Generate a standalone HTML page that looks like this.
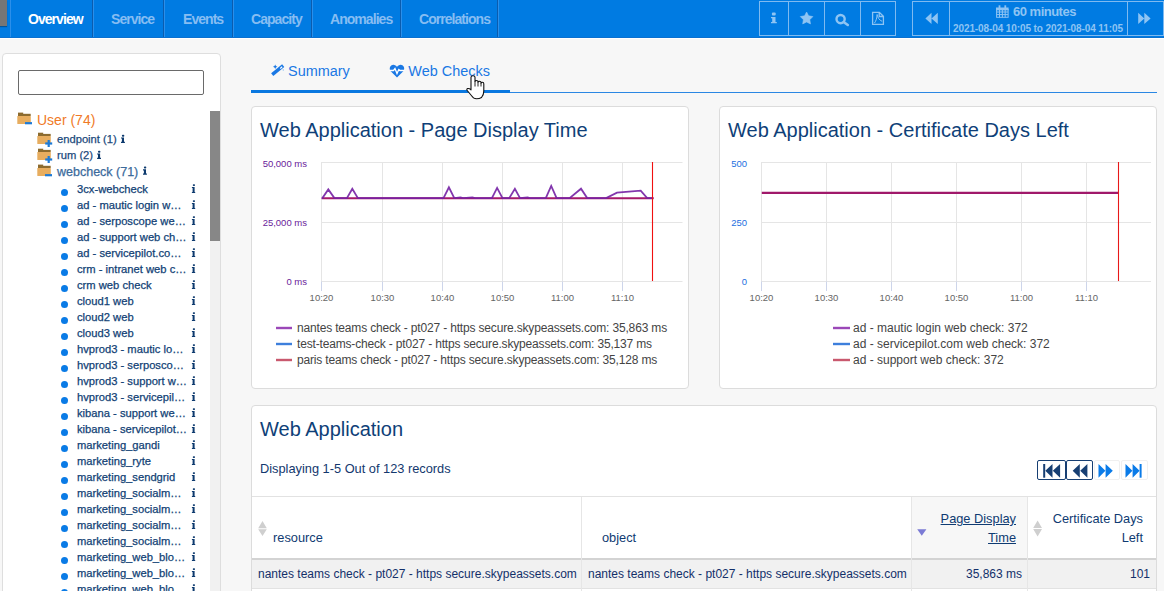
<!DOCTYPE html>
<html><head><meta charset="utf-8">
<style>
*{box-sizing:border-box;margin:0;padding:0}
html,body{width:1164px;height:591px;overflow:hidden;background:#f7f7f7;font-family:"Liberation Sans",sans-serif;position:relative}
.a{position:absolute;white-space:nowrap}
#nav{position:absolute;left:0;top:0;width:1164px;height:38px;background:#007be2;border-bottom:1px solid #0a70d0}
#navline{position:absolute;left:0;top:38px;width:1164px;height:1px;background:#fff}
.sepd{position:absolute;top:0;width:1px;height:37px;background:#0b5cae}
.sepl{position:absolute;top:0;width:1px;height:37px;background:#2b8fea}
.nv{position:absolute;top:11px;font-size:14px;font-weight:bold;letter-spacing:-0.95px;color:#86bdf2}
.ib{position:absolute;top:1px;height:35px;border:1px solid #7fbaf0}
.panel{position:absolute;background:#fff;border:1px solid #dcdcdc;border-radius:4px}
.ttl{position:absolute;font-size:20px;color:#0f3f78;margin-top:1px}
.tree{position:absolute;font-size:11.2px;color:#113f75;-webkit-text-stroke-width:0.25px}
.dot{position:absolute;width:7px;height:7px;border-radius:50%;background:#0a7be6}
.inf{position:absolute;font-family:"Liberation Serif",serif;font-weight:bold;font-size:11px;color:#103a6a}
.leg{font-size:12px;color:#444;letter-spacing:-0.17px}
.th{font-size:12.8px;color:#0f3b72}
.td{font-size:12px;color:#13306a}
</style></head>
<body>
<div id="nav"></div>
<div id="navline"></div>
<div class="a" style="left:0;top:0;width:7px;height:26px;background:#767676;box-shadow:0 1px 1px rgba(0,0,0,0.3)"></div>
<div class="sepl" style="left:10px"></div>
<div class="sepd" style="left:92px"></div><div class="sepl" style="left:93px"></div>
<div class="sepd" style="left:163px"></div><div class="sepl" style="left:164px"></div>
<div class="sepd" style="left:232px"></div><div class="sepl" style="left:233px"></div>
<div class="sepd" style="left:311px"></div><div class="sepl" style="left:312px"></div>
<div class="sepd" style="left:400px"></div><div class="sepl" style="left:401px"></div>
<div class="sepd" style="left:497px"></div><div class="sepl" style="left:498px"></div>
<div class="a nv" style="left:28px;color:#fff">Overview</div>
<div class="a nv" style="left:111px">Service</div>
<div class="a nv" style="left:183px">Events</div>
<div class="a nv" style="left:251px">Capacity</div>
<div class="a nv" style="left:330px">Anomalies</div>
<div class="a nv" style="left:419px">Correlations</div>


<!-- nav right buttons -->
<div class="ib" style="left:759px;width:137px"></div>
<div class="a" style="left:788px;top:1px;width:1px;height:35px;background:#7fbaf0"></div>
<div class="a" style="left:824px;top:1px;width:1px;height:35px;background:#7fbaf0"></div>
<div class="a" style="left:860px;top:1px;width:1px;height:35px;background:#7fbaf0"></div>
<svg class="a" style="left:0;top:0" width="1164" height="38">
 <g fill="#8ec4f3">
  <!-- info -->
  <rect x="771.9" y="12.4" width="3.8" height="3.2" rx="1"/>
  <path d="M771 17h4.5v5h1.3v1.2h-5.8v-1.2h1.2v-3.8h-1.2z"/>
  <!-- star -->
  <path d="M806.6 12.0 L808.6 15.8 L812.9 16.6 L809.8 19.7 L810.5 23.9 L806.6 22.0 L802.7 23.9 L803.4 19.7 L800.3 16.6 L804.6 15.8 Z" stroke="#8ec4f3" stroke-width="0.6" stroke-linejoin="round"/>
 </g>
 <g fill="none" stroke="#8ec4f3">
  <circle cx="840.6" cy="19.1" r="4.1" stroke-width="2.4"/>
  <path d="M843.6 22 L847.8 25" stroke-width="2.6" stroke-linecap="round"/>
  <path d="M872.6 12.3h6.8l4 4v8.1h-10.8z M879.2 12.3v4.2h4.2" stroke-width="1.3"/>
  <path d="M874.5 23c1.5-2 2.5-5 2.6-8.5c0.5 3 2 5.5 5 6.8" stroke-width="1"/>
 </g>
 <g fill="#8ec4f3">
  <!-- rewind -->
  <path d="M925.4 18.4 L931.5 12.7 V24.1 Z M931.5 18.4 L937.8 12.7 V24.1 Z"/>
  <!-- forward -->
  <path d="M1138.2 12.7 L1144.3 18.4 L1138.2 24.1 Z M1144.3 12.7 L1150.6 18.4 L1144.3 24.1 Z"/>
  <!-- calendar -->
  <rect x="996" y="7.5" width="12.6" height="2.8"/>
  <rect x="998.6" y="5.3" width="1.8" height="3"/><rect x="1004.4" y="5.3" width="1.8" height="3"/>
 </g>
 <g fill="none" stroke="#8ec4f3" stroke-width="1">
  <rect x="996.6" y="9.5" width="11.5" height="7.8"/>
  <path d="M999.5 9.5v7.8M1002.4 9.5v7.8M1005.2 9.5v7.8M996.6 12h11.5M996.6 14.6h11.5"/>
 </g>
</svg>
<div class="ib" style="left:912px;width:252px"></div>
<div class="a" style="left:949px;top:1px;width:1px;height:35px;background:#7fbaf0"></div>
<div class="a" style="left:1127px;top:1px;width:1px;height:35px;background:#7fbaf0"></div>
<div class="a" style="left:1013px;top:3.5px;font-size:13px;font-weight:bold;color:#8ec4f3;letter-spacing:-0.5px">60 minutes</div>
<div class="a" style="left:953px;top:23px;font-size:10px;font-weight:bold;letter-spacing:-0.1px;color:#8ec4f3">2021-08-04 10:05 to 2021-08-04 11:05</div>

<!-- sidebar -->
<div class="panel" style="left:2px;top:53px;width:219px;height:560px;border-color:#dedede"></div>
<div class="a" style="left:18px;top:70px;width:186px;height:25px;border:1px solid #6a6a6a;border-radius:2px;background:#fff"></div>
<div class="a" style="left:210px;top:111px;width:10px;height:480px;background:#f1f1f1"></div>
<div class="a" style="left:210px;top:111px;width:10px;height:130px;background:#878787"></div>
<svg class="a" style="left:0;top:100px" width="220" height="90">
 <defs>
  <g id="fold"><rect x="1" y="0.3" width="5.2" height="1.5" fill="#8c6b2f"/><rect x="1" y="1.5" width="12.7" height="2.2" fill="#8c6b2f"/><rect x="0.3" y="3.6" width="13.5" height="8.1" rx="0.6" fill="#e7ad5f"/></g>
  <g id="minus"><rect x="8" y="9.8" width="7" height="2.2" fill="#1d7ad6"/></g>
  <g id="plus"><rect x="8.2" y="10" width="7" height="2.2" fill="#1d7ad6"/><rect x="10.6" y="7.6" width="2.2" height="7" fill="#1d7ad6"/></g>
 </defs>
 <g transform="translate(17,12.3)"><use href="#fold"/><use href="#minus"/></g>
 <g transform="translate(37,32.4)"><use href="#fold"/><use href="#plus"/></g>
 <g transform="translate(37,48.4)"><use href="#fold"/><use href="#plus"/></g>
 <g transform="translate(37,64.3)"><use href="#fold"/><use href="#minus"/></g>
</svg>
<div class="a" style="left:37px;top:112px;font-size:14px;color:#f07a27">User (74)</div>
<div class="a tree" style="left:57px;top:133px;color:#1c4a7c">endpoint (1)</div>
<div class="a tree" style="left:57px;top:149px;color:#1c4a7c">rum (2)</div>
<div class="a tree" style="left:57px;top:164.5px;font-size:12.5px;color:#3b6a9b">webcheck (71)</div>
<div class="dot" style="left:61px;top:188.5px"></div><div class="a tree" style="left:77px;top:183.2px">3cx-webcheck</div>
<div class="dot" style="left:61px;top:204.5px"></div><div class="a tree" style="left:77px;top:199.2px">ad - mautic login w…</div>
<div class="dot" style="left:61px;top:220.5px"></div><div class="a tree" style="left:77px;top:215.2px">ad - serposcope we…</div>
<div class="dot" style="left:61px;top:236.5px"></div><div class="a tree" style="left:77px;top:231.2px">ad - support web ch…</div>
<div class="dot" style="left:61px;top:252.5px"></div><div class="a tree" style="left:77px;top:247.2px">ad - servicepilot.co…</div>
<div class="dot" style="left:61px;top:268.5px"></div><div class="a tree" style="left:77px;top:263.2px">crm - intranet web c…</div>
<div class="dot" style="left:61px;top:284.5px"></div><div class="a tree" style="left:77px;top:279.2px">crm web check</div>
<div class="dot" style="left:61px;top:300.5px"></div><div class="a tree" style="left:77px;top:295.2px">cloud1 web</div>
<div class="dot" style="left:61px;top:316.5px"></div><div class="a tree" style="left:77px;top:311.2px">cloud2 web</div>
<div class="dot" style="left:61px;top:332.5px"></div><div class="a tree" style="left:77px;top:327.2px">cloud3 web</div>
<div class="dot" style="left:61px;top:348.5px"></div><div class="a tree" style="left:77px;top:343.2px">hvprod3 - mautic lo…</div>
<div class="dot" style="left:61px;top:364.5px"></div><div class="a tree" style="left:77px;top:359.2px">hvprod3 - serposco…</div>
<div class="dot" style="left:61px;top:380.5px"></div><div class="a tree" style="left:77px;top:375.2px">hvprod3 - support w…</div>
<div class="dot" style="left:61px;top:396.5px"></div><div class="a tree" style="left:77px;top:391.2px">hvprod3 - servicepil…</div>
<div class="dot" style="left:61px;top:412.5px"></div><div class="a tree" style="left:77px;top:407.2px">kibana - support we…</div>
<div class="dot" style="left:61px;top:428.5px"></div><div class="a tree" style="left:77px;top:423.2px">kibana - servicepilot…</div>
<div class="dot" style="left:61px;top:444.5px"></div><div class="a tree" style="left:77px;top:439.2px">marketing_gandi</div>
<div class="dot" style="left:61px;top:460.5px"></div><div class="a tree" style="left:77px;top:455.2px">marketing_ryte</div>
<div class="dot" style="left:61px;top:476.5px"></div><div class="a tree" style="left:77px;top:471.2px">marketing_sendgrid</div>
<div class="dot" style="left:61px;top:492.5px"></div><div class="a tree" style="left:77px;top:487.2px">marketing_socialm…</div>
<div class="dot" style="left:61px;top:508.5px"></div><div class="a tree" style="left:77px;top:503.2px">marketing_socialm…</div>
<div class="dot" style="left:61px;top:524.5px"></div><div class="a tree" style="left:77px;top:519.2px">marketing_socialm…</div>
<div class="dot" style="left:61px;top:540.5px"></div><div class="a tree" style="left:77px;top:535.2px">marketing_socialm…</div>
<div class="dot" style="left:61px;top:556.5px"></div><div class="a tree" style="left:77px;top:551.2px">marketing_web_blo…</div>
<div class="dot" style="left:61px;top:572.5px"></div><div class="a tree" style="left:77px;top:567.2px">marketing_web_blo…</div>
<div class="dot" style="left:61px;top:588.5px"></div><div class="a tree" style="left:77px;top:583.2px">marketing_web_blo…</div>

<svg class="a" style="left:0;top:0" width="220" height="591">
 <defs>
  <g id="infi" fill="#0d3a6e"><rect x="0.9" y="0" width="2.2" height="1.9" rx="0.8"/><path d="M0 2.9H2.7V7.7H3.3V8.7H0V7.7H0.7V3.9H0Z"/></g>
  <g id="infp" fill="#0d3a6e"><rect x="1.1" y="0" width="2.4" height="2" rx="0.9"/><path d="M0.2 2.8H3.2V7.1H4.1V8.2H0.2V7.1H1.1V3.9H0.2Z"/></g>
 </defs>
 <use href="#infi" x="191.9" y="184.2"/><use href="#infi" x="191.9" y="200.2"/><use href="#infi" x="191.9" y="216.2"/><use href="#infi" x="191.9" y="232.2"/><use href="#infi" x="191.9" y="248.2"/><use href="#infi" x="191.9" y="264.2"/><use href="#infi" x="191.9" y="280.2"/><use href="#infi" x="191.9" y="296.2"/><use href="#infi" x="191.9" y="312.2"/><use href="#infi" x="191.9" y="328.2"/><use href="#infi" x="191.9" y="344.2"/><use href="#infi" x="191.9" y="360.2"/><use href="#infi" x="191.9" y="376.2"/><use href="#infi" x="191.9" y="392.2"/><use href="#infi" x="191.9" y="408.2"/><use href="#infi" x="191.9" y="424.2"/><use href="#infi" x="191.9" y="440.2"/><use href="#infi" x="191.9" y="456.2"/><use href="#infi" x="191.9" y="472.2"/><use href="#infi" x="191.9" y="488.2"/><use href="#infi" x="191.9" y="504.2"/><use href="#infi" x="191.9" y="520.2"/><use href="#infi" x="191.9" y="536.2"/><use href="#infi" x="191.9" y="552.2"/><use href="#infi" x="191.9" y="568.2"/><use href="#infi" x="191.9" y="584.2"/><use href="#infp" x="120.8" y="134.7"/><use href="#infp" x="96.9" y="150.7"/><use href="#infp" x="142.8" y="166.5"/>
</svg>
<!-- tabs -->
<svg class="a" style="left:0;top:0" width="520" height="100">
 <path d="M272.2 74.6 L283.2 65.6" stroke="#1a78e4" stroke-width="3.4" stroke-linecap="butt"/>
 <path d="M280.2 68.5 L282.2 66.8" stroke="#fff" stroke-width="1.2"/>
 <path d="M275.2 64.6l0.7 1.5 1.5 0.7-1.5 0.7-0.7 1.5-0.7-1.5-1.5-0.7 1.5-0.7z" fill="#1a78e4"/>
 <circle cx="283.3" cy="70" r="0.7" fill="#8fc0f0"/>
 <g transform="translate(388,61)">
 <path d="M9 16.5 L3.2 10.8 C0.8 8.4 1.6 4.4 4.6 3.9 C6.6 3.6 8.2 4.7 9 6.1 C9.8 4.7 11.4 3.6 13.4 3.9 C16.4 4.4 17.2 8.4 14.8 10.8 Z" fill="#1a78e4"/>
 <path d="M1.5 9.5 H5.5 L7 7.5 L9 12.5 L10.8 8.5 L12 9.5 H16.5" fill="none" stroke="#fff" stroke-width="1.3"/>
 </g>
</svg>
<div class="a" style="left:288px;top:62.7px;font-size:14.45px;color:#1a78e4">Summary</div>
<div class="a" style="left:408.3px;top:62.7px;font-size:14.45px;color:#1a78e4">Web Checks</div>
<div class="a" style="left:251px;top:92px;width:906px;height:1px;background:#2a87e3"></div>
<div class="a" style="left:251px;top:90px;width:259px;height:3px;background:#0a78e0"></div>
<!-- panels -->
<div class="panel" style="left:251px;top:106px;width:438px;height:283px"></div>
<div class="panel" style="left:719px;top:106px;width:438px;height:283px"></div>
<div class="panel" style="left:251px;top:405px;width:906px;height:200px"></div>
<div class="a ttl" style="left:260px;top:118px">Web Application - Page Display Time</div>
<div class="a ttl" style="left:728px;top:118px">Web Application - Certificate Days Left</div>
<div class="a ttl" style="left:260px;top:417px">Web Application</div>
<div class="a" style="left:260px;top:461.3px;font-size:12.8px;color:#13386e">Displaying 1-5 Out of 123 records</div>
<!--charts-->
<svg class="a" style="left:0;top:0" width="1164" height="591">
 <g stroke="#e5e5e5" stroke-width="1" fill="none">
  <path d="M321 162.5H682.5M321 222.5H682.5M321 281.5H682.5"/>
  <path d="M321.5 162V281"/><path d="M382.5 162V281"/><path d="M442.5 162V281"/><path d="M502.5 162V281"/><path d="M562.5 162V281"/><path d="M622.5 162V281"/>
  <path d="M761 162.5H1151M761 222.5H1151M761 281.5H1151"/>
  <path d="M761.5 162V281"/><path d="M826.5 162V281"/><path d="M891.5 162V281"/><path d="M956.5 162V281"/><path d="M1021.5 162V281"/><path d="M1086.5 162V281"/>
 </g>
 <g stroke="#cdd5ea" stroke-width="1" fill="none"><path d="M321.5 281.5V291"/><path d="M382.5 281.5V291"/><path d="M442.5 281.5V291"/><path d="M502.5 281.5V291"/><path d="M562.5 281.5V291"/><path d="M622.5 281.5V291"/><path d="M761.5 281.5V291"/><path d="M826.5 281.5V291"/><path d="M891.5 281.5V291"/><path d="M956.5 281.5V291"/><path d="M1021.5 281.5V291"/><path d="M1086.5 281.5V291"/></g>
 <g font-family="Liberation Sans" font-size="9.5" fill="#6a1b9a" text-anchor="end">
  <text x="307" y="167.2">50,000 ms</text><text x="307" y="226.3">25,000 ms</text><text x="307" y="285.3">0 ms</text>
 </g>
 <g font-family="Liberation Sans" font-size="9.5" fill="#1e6fe0" text-anchor="end">
  <text x="747" y="167.2">500</text><text x="747" y="226.3">250</text><text x="747" y="285">0</text>
 </g>
 <g font-family="Liberation Sans" font-size="9.5" fill="#666" text-anchor="middle"><text x="321.5" y="300.8">10:20</text><text x="382.5" y="300.8">10:30</text><text x="442.5" y="300.8">10:40</text><text x="502.5" y="300.8">10:50</text><text x="562.5" y="300.8">11:00</text><text x="622.5" y="300.8">11:10</text><text x="761.5" y="300.8">10:20</text><text x="826.5" y="300.8">10:30</text><text x="891.5" y="300.8">10:40</text><text x="956.5" y="300.8">10:50</text><text x="1021.5" y="300.8">11:00</text><text x="1086.5" y="300.8">11:10</text></g>
 <path d="M321.7 198.3H653.5" stroke="#a5196a" stroke-width="2" fill="none"/>
 <polyline points="321.7,198.1 322.4,198.1 328.3,189.4 334.4,198.1 346.9,198.1 352.3,188.7 357.9,198.1 443.5,198.1 448.9,187.3 454.3,198.1 460.5,197.3 463.0,198.1 472.4,197.3 475.0,198.1 491.9,198.1 497.1,187.9 502.5,198.1 509.2,198.1 514.9,188.7 520.0,198.1 527.6,197.5 530.0,198.1 545.8,198.1 551.2,186.0 556.6,198.1 569.6,198.1 581.0,188.7 587.2,198.1 606.1,198.1 617.0,192.7 640.7,190.6 647.2,198.1 653.5,198.1" stroke="#7420a4" stroke-width="1.8" stroke-opacity="0.9" fill="none" stroke-linejoin="miter"/>
 <path d="M652.5 162V281" stroke="#f01010" stroke-width="1.1"/>
 <path d="M761.8 192.8H1118.5" stroke="#a0186a" stroke-width="2.2"/>
 <path d="M1118.5 162V281" stroke="#e81818" stroke-width="1.1"/>
 <g stroke-width="2.4">
  <path d="M276 328H292" stroke="#9b48b8"/><path d="M276 344H292" stroke="#3d7fdc"/><path d="M276 360H292" stroke="#c9596e"/>
  <path d="M833 328H850" stroke="#9b48b8"/><path d="M833 344H850" stroke="#3d7fdc"/><path d="M833 360H850" stroke="#c9596e"/>
 </g>
</svg>
<div class="a leg" style="left:297px;top:320.8px">nantes teams check - pt027 - https secure.skypeassets.com: 35,863 ms</div>
<div class="a leg" style="left:297px;top:336.8px">test-teams-check - pt027 - https secure.skypeassets.com: 35,137 ms</div>
<div class="a leg" style="left:297px;top:352.8px">paris teams check - pt027 - https secure.skypeassets.com: 35,128 ms</div>
<div class="a leg" style="left:853px;top:320.8px;letter-spacing:0">ad - mautic login web check: 372</div>
<div class="a leg" style="left:853px;top:336.8px;letter-spacing:0">ad - servicepilot.com web check: 372</div>
<div class="a leg" style="left:853px;top:352.8px;letter-spacing:0">ad - support web check: 372</div>
<!--/charts-->




<!-- table -->
<div class="a" style="left:252px;top:496px;width:904px;height:1px;background:#e2e2e2"></div>
<div class="a" style="left:911px;top:497px;width:117px;height:62px;background:#f7f7f7"></div>
<div class="a" style="left:252px;top:558px;width:904px;height:2px;background:#d3d3d3"></div>
<div class="a" style="left:252px;top:560px;width:904px;height:28px;background:#f1f1f1"></div>
<div class="a" style="left:252px;top:588px;width:904px;height:1px;background:#e2e2e2"></div>
<div class="a" style="left:581px;top:497px;width:1px;height:94px;background:#e6e6e6"></div>
<div class="a" style="left:911px;top:497px;width:1px;height:94px;background:#e6e6e6"></div>
<div class="a" style="left:1027px;top:497px;width:1px;height:94px;background:#e6e6e6"></div>
<svg class="a" style="left:0;top:490px" width="1164" height="60">
 <g fill="#cfcfcf"><path d="M258.2 38.3L262.5 31L266.8 38.3Z M258.2 39.3H266.8L262.5 46Z"/>
 <path d="M1033.2 38L1037.6 30.5L1042 38Z M1033.2 39H1042L1037.6 46.5Z"/></g>
 <path d="M917.2 39.3H926.4L921.8 45.7Z" fill="#7b7bd5"/>
</svg>
<div class="a th" style="left:273px;top:530px">resource</div>
<div class="a th" style="left:602px;top:530px">object</div>
<div class="a th" style="left:900px;top:510px;width:116px;text-align:right;text-decoration:underline;line-height:18.5px">Page Display<br>Time</div>
<div class="a th" style="left:1030px;top:510px;width:113px;text-align:right;line-height:18.5px">Certificate Days<br>Left</div>
<div class="a td" style="left:258px;top:566.8px">nantes teams check - pt027 - https secure.skypeassets.com</div>
<div class="a td" style="left:588px;top:566.8px">nantes teams check - pt027 - https secure.skypeassets.com</div>
<div class="a td" style="left:900px;top:566.8px;width:122px;text-align:right">35,863 ms</div>
<div class="a td" style="left:1050px;top:566.8px;width:100px;text-align:right">101</div>

<!-- pager -->
<div class="a" style="left:1037px;top:460px;width:29px;height:20px;border:1.5px solid #173f73;border-radius:2px;background:#fff"></div>
<div class="a" style="left:1066px;top:460px;width:27px;height:20px;border:1.5px solid #173f73;border-radius:2px;background:#fff"></div>
<div class="a" style="left:1094px;top:460px;width:26px;height:20px;border:1px solid #f0f0f0;border-radius:2px;background:#fff"></div>
<div class="a" style="left:1121px;top:460px;width:27px;height:20px;border:1px solid #f0f0f0;border-radius:2px;background:#fff"></div>
<svg class="a" style="left:0;top:450px" width="1164" height="40">
 <g fill="#173f73"><rect x="1043.2" y="14" width="2" height="13.7"/><path d="M1045.3 20.8L1052.5 14V27.7Z M1052.8 20.8L1060.1 14V27.7Z"/>
 <path d="M1072.7 20.8L1079.8 14V27.7Z M1080.2 20.8L1087.4 14V27.7Z"/></g>
 <g fill="#0a7be8"><path d="M1098.5 14L1105.4 20.8L1098.5 27.7Z M1105.6 14L1112.8 20.8L1105.6 27.7Z"/>
 <path d="M1125.5 14L1132.4 20.8L1125.5 27.7Z M1132.6 14L1139.6 20.8L1132.6 27.7Z"/><rect x="1139.6" y="14" width="2" height="13.7"/></g>
</svg>

<svg class="a" style="left:466px;top:75px" width="20" height="26">
 <path d="M5 13 V2.2 Q5 0.8 7 0.8 Q9 0.8 9 2.2 V6.5 Q9 5.5 10.5 5.5 Q12 5.5 12 6.8 V7.2 Q12 6.3 13.5 6.3 Q15 6.3 15 7.5 V8.2 Q15 7.3 16.4 7.3 Q17.8 7.3 17.8 8.8 V16 Q17.8 20 15.5 22.5 Q13.5 23.8 10.5 23.8 Q7.5 23.8 5.8 21 L1.2 15.5 Q0.3 14.2 1.6 13.6 Q3 13 5 14.8 Z" fill="#fff" stroke="#111" stroke-width="1.1" stroke-linejoin="round"/>
 <path d="M9 6.5V11.5M12 7.2V11.5M15 8.2V11.5" stroke="#111" stroke-width="0.9"/>
</svg>
</body></html>
